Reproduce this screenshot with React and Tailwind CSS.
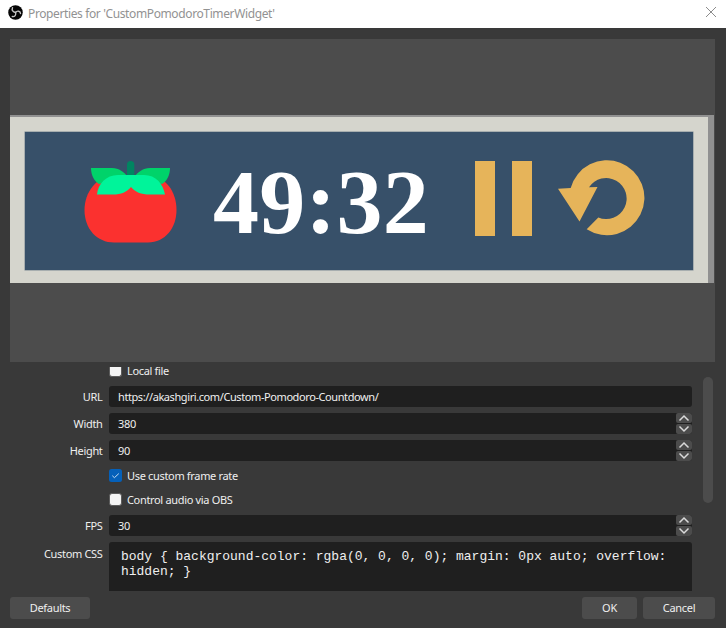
import React from "react";

function ObsLogo() {
  return (
    <svg className="h-[15px] w-[15px] shrink-0" viewBox="0 0 30 30">
      <circle cx="15" cy="15" r="14.5" fill="#050505" />
      <g fill="none" stroke="#c4c4c4" strokeWidth="2.8" strokeLinecap="round">
        <path d="M9 5.500c-2 5 1 9 6 9.500" />
        <path d="M25 17c0-5-6.500-6.500-10-2" />
        <path d="M8.500 23c5 1 8.500-3 6.500-8" />
      </g>
    </svg>
  );
}

function Tomato() {
  return (
    <svg className="ml-[59px] mt-[28px] h-[84px] w-[94px] shrink-0" viewBox="84 160 94 84">
      <path d="M117 175H145C166 175 176.500 192 176.500 210C176.500 228 165 242.500 148 242.500H114C97 242.500 84.500 229 84.500 210C84.500 193 96 175 117 175Z" fill="#fb312f" />
      <rect x="127" y="161" width="7.300" height="20" rx="3.600" fill="#008561" />
      <path d="M91 168H112C119 168 124 172 128 177L99 184C94 181 91 175 91 168Z" fill="#00d36a" />
      <path d="M170 168H150C143 168 138 172 134 177L162 184C167 181 170 175 170 168Z" fill="#00d36a" />
      <path d="M97 194.500C98 184 106 175 118 175H144C156 175 163 184 165 194.500H150C141 194.500 135 192 131 187C127 192 121 194.500 113 194.500Z" fill="#00f49a" />
    </svg>
  );
}

function Restart() {
  return (
    <svg className="ml-[26px] mt-[28px] h-[77px] w-[88px] shrink-0" viewBox="558 160 88 77">
      <path
        d="M558 188.700L570.700 188A37.500 37.500 0 1 1 586.700 229.300L598.300 217.500A20.500 20.500 0 1 0 589 187.300L597.500 187L579.500 221.500Z"
        fill="#e6b45a"
      />
    </svg>
  );
}

function Preview() {
  return (
    <div className="mx-[10px] mt-[11px] h-[323px] w-[705px] bg-[#4c4c4c] pt-[76px]">
      <div className="h-[168px] w-[704px] bg-[#919191] pt-[2px]">
        <div className="h-[166px] w-[697.5px] bg-[#d5d5cd] pl-[15px] pt-[15px]">
          <div className="flex h-[137.5px] w-[667.5px] items-start bg-[#375069] shadow-[0_0_0_0.5px_#7b8791]">
            <Tomato />
            <div className="ml-[35px] mt-[16px] w-[219px] shrink-0 whitespace-nowrap font-['Liberation_Serif',serif] text-[92px] font-bold leading-[108px] tracking-[0.3px] text-white">
              49:32
            </div>
            <div className="ml-[43px] mt-[29px] flex shrink-0 gap-[17.5px]">
              <div className="h-[74.5px] w-[19.5px] bg-[#e6b45a]" />
              <div className="h-[74.5px] w-[19.5px] bg-[#e6b45a]" />
            </div>
            <Restart />
          </div>
        </div>
      </div>
    </div>
  );
}

function Spinner() {
  return (
    <div className="flex w-4 shrink-0 flex-col gap-px">
      <div className="flex h-[10px] items-center justify-center rounded-[2px] bg-[#4c4c4c]">
        <svg className="h-[10px] w-4" viewBox="0 0 16 10"><path d="M3.500 7.500L8 3l4.500 4.500" fill="none" stroke="#dadada" strokeWidth="1.500" /></svg>
      </div>
      <div className="flex h-[10px] items-center justify-center rounded-[2px] bg-[#4c4c4c]">
        <svg className="h-[10px] w-4" viewBox="0 0 16 10"><path d="M3.500 2.500L8 7l4.500-4.500" fill="none" stroke="#dadada" strokeWidth="1.500" /></svg>
      </div>
    </div>
  );
}

function Row({ label, value, spin, tracking }) {
  return (
    <div className="flex h-[21px] items-start">
      <div className="w-[102.5px] shrink-0 text-right leading-[21px]">{label}</div>
      <div className="ml-[6.5px] flex h-[21px] w-[583px] overflow-hidden rounded-[3px] bg-[#1f1f1f]">
        <div className={`grow pl-[9px] leading-[21px] ${tracking || ""}`}>{value}</div>
        {spin && <Spinner />}
      </div>
    </div>
  );
}

function Check({ label, checked }) {
  return (
    <div className="flex h-[13px] items-center pl-[109px]">
      {checked ? (
        <svg className="h-[13px] w-[13px] shrink-0" viewBox="0 0 13 13">
          <rect width="13" height="13" rx="2.500" fill="#0560b9" />
          <path d="M3.300 6.700l2.100 2L9.800 4.600" fill="none" stroke="#c3dcf3" strokeWidth="1" />
        </svg>
      ) : (
        <div className="h-[13px] w-[13px] shrink-0 rounded-[3px] border border-[#5c5c5c] bg-[#f4f4f4]" />
      )}
      <div className="ml-[5px] whitespace-nowrap leading-[15px]">{label}</div>
    </div>
  );
}

function Button({ className, children }) {
  return <button className={`h-[22px] rounded-[3px] bg-[#4c4c4c] text-center leading-[22px] tracking-[-0.3px] ${className}`}>{children}</button>;
}

export default function App() {
  return (
    <div className="h-[628px] w-[726px] overflow-hidden bg-[#393939] font-['Noto_Sans',sans-serif] text-[11px] tracking-[-0.33px] text-[#efefef]">
      <div className="flex h-7 items-start bg-white pl-[7.5px] pt-[5px]">
        <ObsLogo />
        <div className="ml-[5.5px] grow text-[12px] leading-[17px] tracking-[-0.38px] text-[#929292]">Properties for &#39;CustomPomodoroTimerWidget&#39;</div>
        <svg className="mr-[9px] mt-[1px] h-3 w-3" viewBox="0 0 12 12"><path d="M1 1l10 10M11 1L1 11" stroke="#8c8c8c" strokeWidth="1" /></svg>
      </div>
      <Preview />
      <div className="flex h-[229px]">
        <div className="w-[692px] shrink-0">
          <div className="flex h-[15px] items-end pl-[109px]">
            <div className="h-[10px] w-[13px] shrink-0 rounded-b-[3px] border border-t-0 border-[#5c5c5c] bg-[#f4f4f4]" />
            <div className="ml-[5px] whitespace-nowrap leading-[13px]">Local file</div>
          </div>
          <div className="mt-[9px] flex flex-col gap-[6px]">
            <Row label="URL" value="https://akashgiri.com/Custom-Pomodoro-Countdown/" tracking="tracking-[-0.41px]" />
            <Row label="Width" value="380" spin />
            <Row label="Height" value="90" spin />
          </div>
          <div className="mt-[8px]"><Check label="Use custom frame rate" checked /></div>
          <div className="mt-[11px]"><Check label="Control audio via OBS" /></div>
          <div className="mt-[9px]"><Row label="FPS" value="30" spin /></div>
          <div className="mt-[6px] flex">
            <div className="w-[102.5px] shrink-0 pt-[4px] text-right leading-4">Custom CSS</div>
            <div className="ml-[6.5px] h-[49px] w-[583px] rounded-t-[3px] bg-[#1f1f1f] pl-[12px] pt-[7px] font-['Liberation_Mono',monospace] text-[13px] leading-[15px] tracking-[-0.01px]">
              <div className="whitespace-nowrap">body &#123; background-color: rgba(0, 0, 0, 0); margin: 0px auto; overflow:</div>
              <div className="whitespace-nowrap">hidden; &#125;</div>
            </div>
          </div>
        </div>
        <div className="ml-[11px] mt-[15px] h-[126px] w-[10px] rounded-full bg-[#4c4c4c]" />
      </div>
      <div className="mt-[6px] flex px-[10px]">
        <Button className="w-[80px]">Defaults</Button>
        <Button className="ml-auto w-[55px]">OK</Button>
        <Button className="ml-[6px] mr-[1px] w-[72px]">Cancel</Button>
      </div>
    </div>
  );
}
